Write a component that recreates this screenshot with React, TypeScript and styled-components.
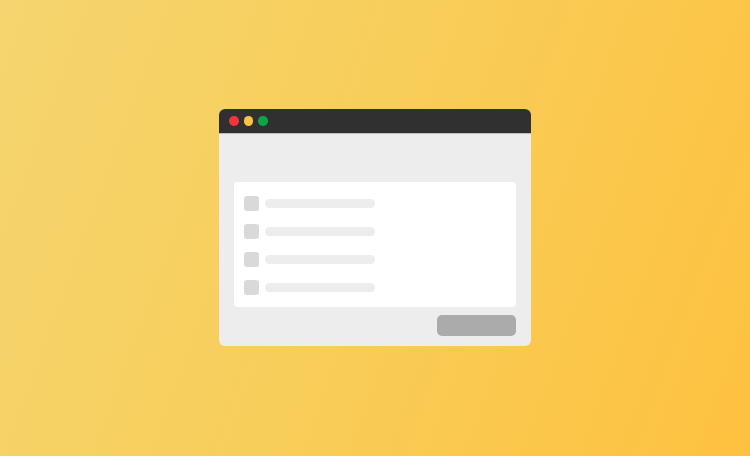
import styled, { createGlobalStyle } from 'styled-components';

const GlobalStyle = createGlobalStyle`
  html, body {
    margin: 0;
    padding: 0;
    height: 100%;
  }
  #root {
    height: 100%;
  }
`;

const Stage = styled.div`
  width: 750px;
  height: 456px;
  display: flex;
  align-items: center;
  justify-content: center;
  background: linear-gradient(110deg, #f5d56f 0%, #f8cd58 50%, #fec13f 100%);
  font-family: 'Liberation Sans', Arial, sans-serif;
`;

const Window = styled.div`
  width: 312px;
  height: 237px;
  margin-bottom: 1px;
  display: flex;
  flex-direction: column;
  border-radius: 6px;
  overflow: hidden;
  background: #ededed;
`;

const TitleBar = styled.div`
  height: 24px;
  display: flex;
  align-items: center;
  gap: 5px;
  padding: 0 0 0 10px;
  background: #303030;
  border-bottom: 1px solid #bdbdbd;
`;

const Dot = styled.span<{ $color: string }>`
  width: 9.5px;
  height: 9.5px;
  border-radius: 50%;
  background: ${(p) => p.$color};
`;

const Body = styled.div`
  flex: 1;
  display: flex;
  flex-direction: column;
  align-items: flex-end;
  gap: 8px;
  padding: 48px 15px 10px;
`;

const Card = styled.div`
  align-self: stretch;
  height: 125px;
  box-sizing: border-box;
  display: flex;
  flex-direction: column;
  gap: 13px;
  padding: 14px 10px;
  border-radius: 4px;
  background: #ffffff;
`;

const Row = styled.div`
  display: flex;
  align-items: center;
  gap: 6px;
`;

const Check = styled.span`
  width: 15px;
  height: 15px;
  border-radius: 3px;
  background: #d9d9d9;
`;

const Line = styled.span`
  width: 110px;
  height: 9px;
  border-radius: 5px;
  background: #ededed;
`;

const Button = styled.button`
  width: 79px;
  height: 21px;
  border: none;
  padding: 0;
  border-radius: 5px;
  background: #ababab;
`;

const App = () => {
  return (
    <>
      <GlobalStyle />
      <Stage>
        <Window>
          <TitleBar>
            <Dot $color="#f5333a" />
            <Dot $color="#fcc243" />
            <Dot $color="#0ea544" />
          </TitleBar>
          <Body>
            <Card>
              {[0, 1, 2, 3].map((i) => (
                <Row key={i}>
                  <Check />
                  <Line />
                </Row>
              ))}
            </Card>
            <Button />
          </Body>
        </Window>
      </Stage>
    </>
  );
};

export default App;
